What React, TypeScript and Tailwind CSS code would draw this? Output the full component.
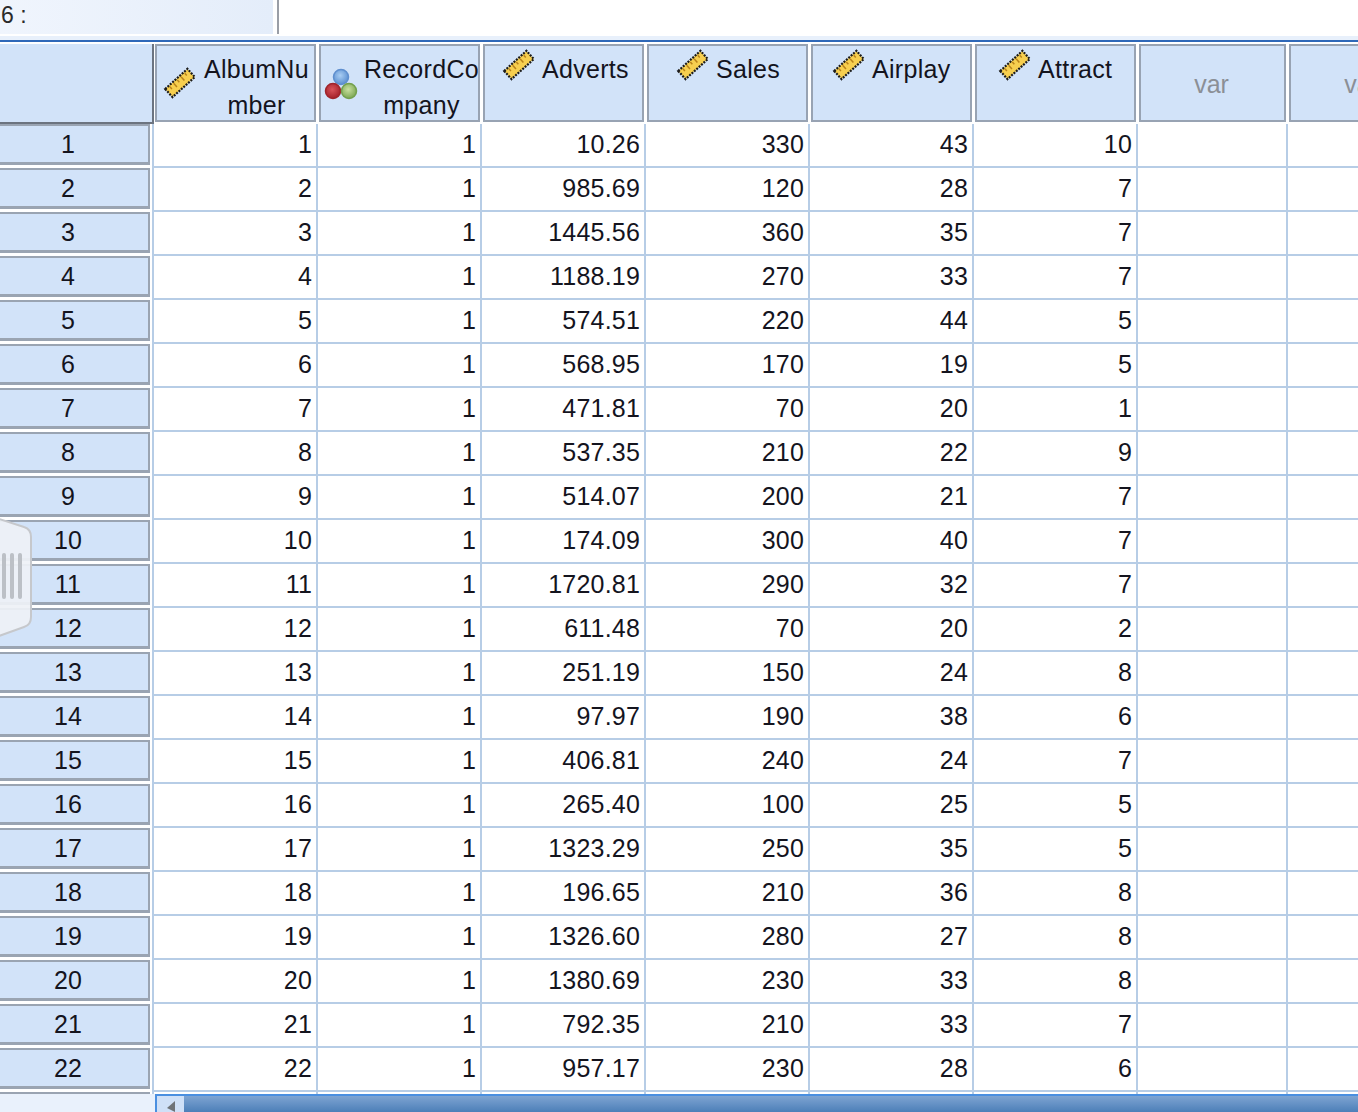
const rows: string[][] = [
  ["1","1","10.26","330","43","10"],["2","1","985.69","120","28","7"],["3","1","1445.56","360","35","7"],
  ["4","1","1188.19","270","33","7"],["5","1","574.51","220","44","5"],["6","1","568.95","170","19","5"],
  ["7","1","471.81","70","20","1"],["8","1","537.35","210","22","9"],["9","1","514.07","200","21","7"],
  ["10","1","174.09","300","40","7"],["11","1","1720.81","290","32","7"],["12","1","611.48","70","20","2"],
  ["13","1","251.19","150","24","8"],["14","1","97.97","190","38","6"],["15","1","406.81","240","24","7"],
  ["16","1","265.40","100","25","5"],["17","1","1323.29","250","35","5"],["18","1","196.65","210","36","8"],
  ["19","1","1326.60","280","27","8"],["20","1","1380.69","230","33","8"],["21","1","792.35","210","33","7"],
  ["22","1","957.17","230","28","6"],
];

function Ruler({ className }: { className: string }) {
  return (
    <svg width="34" height="32" viewBox="0 0 34 32" className={className}>
      <g transform="rotate(-42 17 16)">
        <rect x="2" y="10.5" width="30" height="11" fill="#f7cf4f" stroke="#1c1c1c" strokeWidth="2.2" strokeDasharray="2 1.2" />
        <path d="M7 12v3M12 12v5M17 12v3M22 12v5M27 12v3" stroke="#b9821a" strokeWidth="1.5" fill="none" />
      </g>
    </svg>
  );
}

function Balls({ className }: { className: string }) {
  return (
    <svg width="34" height="32" viewBox="0 0 34 32" className={className}>
      <defs>
        <radialGradient id="bb" cx="45%" cy="40%" r="60%"><stop offset="0%" stopColor="#a9cdf3" /><stop offset="100%" stopColor="#5b8fd0" /></radialGradient>
        <radialGradient id="br" cx="45%" cy="40%" r="60%"><stop offset="0%" stopColor="#d9535a" /><stop offset="100%" stopColor="#a3202a" /></radialGradient>
        <radialGradient id="bg" cx="45%" cy="40%" r="60%"><stop offset="0%" stopColor="#c9e0a0" /><stop offset="100%" stopColor="#7ba652" /></radialGradient>
      </defs>
      <circle cx="17" cy="9" r="7.5" fill="url(#bb)" stroke="#5f8fcf" strokeWidth="1.5" />
      <circle cx="9" cy="23" r="7.5" fill="url(#br)" stroke="#a0252c" strokeWidth="1.5" />
      <circle cx="25" cy="23" r="7.5" fill="url(#bg)" stroke="#73a04d" strokeWidth="1.5" />
    </svg>
  );
}

function VarHeader({ name, pad }: { name: string; pad: string }) {
  return (
    <div className={`h-[78px] w-[161px] mr-[3px] shrink-0 bg-[#d2e3f9] border-2 border-[#98a3b3] flex items-start overflow-hidden ${pad}`}>
      <Ruler className="mt-[3px] shrink-0" />
      <span className="mt-[5px] ml-[6px] leading-[36px] tracking-[0.3px]">{name}</span>
    </div>
  );
}

function TwoLineHeader({ a, b, nominal }: { a: string; b: string; nominal?: boolean }) {
  return (
    <div className={`h-[78px] w-[161px] mr-[3px] shrink-0 bg-[#d2e3f9] border-2 border-[#98a3b3] flex items-start overflow-hidden ${nominal ? "pl-[3px]" : "pl-[6px]"}`}>
      {nominal ? <Balls className="mt-[22px] shrink-0" /> : <Ruler className="mt-[21px] shrink-0" />}
      <div className={`mt-[5px] leading-[36px] text-center tracking-[0.3px] whitespace-nowrap ${nominal ? "ml-[6px]" : "ml-[7px]"}`}>
        <div>{a}</div>
        <div>{b}</div>
      </div>
    </div>
  );
}

function EmptyHeader() {
  return (
    <div className="h-[78px] w-[147px] mr-[3px] shrink-0 bg-[#d2e3f9] border-2 border-[#98a3b3] flex items-center justify-center text-[#8b8f96] pt-[4px] pr-[2px]">
      var
    </div>
  );
}

export default function App() {
  return (
    <div className="relative w-[1358px] h-[1112px] overflow-hidden bg-white text-[25px] text-[#14141e] font-['Liberation_Sans',Arial,sans-serif]">
      {/* Cell editor bar */}
      <div className="flex h-[34px]">
        <div className="w-[273px] bg-gradient-to-r from-[#f0f5fd] to-[#e4edfa] leading-[30px] text-[23px] pl-[1px] text-[#2a2a2a]">6 :</div>
        <div className="w-[4px]" />
        <div className="w-[2px] bg-[#9a9ea6]" />
      </div>
      <div className="h-[2px] bg-white" />
      <div className="h-[4px] bg-[#e8f0fb]" />
      <div className="h-[2px] bg-[#2f68b8]" />
      <div className="h-[2px] bg-white" />

      {/* Header row */}
      <div className="flex h-[80px] overflow-hidden">
        <div className="w-[154px] mr-[1px] h-[80px] shrink-0 bg-[#d2e3f9] border-r-2 border-b-2 border-[#6c7480]" />
        <TwoLineHeader a="AlbumNu" b="mber" />
        <TwoLineHeader a="RecordCo" b="mpany" nominal />
        <VarHeader name="Adverts" pad="pl-[17px]" />
        <VarHeader name="Sales" pad="pl-[27px]" />
        <VarHeader name="Airplay" pad="pl-[19px]" />
        <VarHeader name="Attract" pad="pl-[21px]" />
        <EmptyHeader />
        <EmptyHeader />
      </div>

      {/* Data rows */}
      <div className="flex flex-col">
        {rows.map((r, i) => (
          <div key={i} className="flex h-[44px]">
            <div className="w-[152px] shrink-0">
              <div className="h-[41px] w-[150px] bg-[#d2e3f9] border-t-2 border-r-[2px] border-b-[3px] border-[#9aa4b2] flex items-center justify-center pr-[12px] pt-[1px] tracking-[0.2px]">
                {i + 1}
              </div>
            </div>
            <div className="w-[2px] shrink-0 bg-[#b7cde6]" />
            <div className="flex flex-1 border-b-2 border-[#b7cde6]">
              {r.map((v, j) => (
                <div key={j} className="w-[164px] shrink-0 border-r-2 border-[#b7cde6] pl-[1px] pr-[4px] flex items-center justify-end tracking-[0.2px]">
                  {v}
                </div>
              ))}
              <div className="w-[150px] shrink-0 border-r-2 border-[#b7cde6]" />
              <div className="flex-1" />
            </div>
          </div>
        ))}
      </div>

      {/* Stub of the next row, cut off by the scrollbar */}
      <div className="flex h-[2px]">
        <div className="w-[150px] shrink-0 mr-[2px] bg-[#9aa4b2]" />
        <div className="w-[2px] shrink-0 bg-[#b7cde6]" />
        {rows[0].map((_, j) => (
          <div key={j} className="w-[164px] shrink-0 border-r-2 border-[#b7cde6]" />
        ))}
        <div className="w-[150px] shrink-0 border-r-2 border-[#b7cde6]" />
      </div>

      {/* Bottom scrollbar */}
      <div className="flex h-[18px]">
        <div className="w-[155px] shrink-0 bg-[#e9f1fc]" />
        <div className="flex-1 flex border-t-2 border-l-2 border-[#4a8fe0]">
          <div className="w-[27px] bg-[#cfe0f7] flex items-end justify-center">
            <svg width="10" height="12" viewBox="0 0 10 12"><path d="M9 1L1 8L9 12Z" fill="#6f7378" /></svg>
          </div>
          <div className="flex-1 bg-gradient-to-b from-[#7ea4d2] to-[#4c7fb8]" />
        </div>
      </div>

      {/* Floating splitter handle */}
      <div className="absolute left-[-4px] top-[517px] w-[36px] h-[120px]">
        <svg width="36" height="120" viewBox="0 0 36 120">
          <path d="M0 1L28 10Q35 12 35 20V100Q35 108 28 110L0 120Z" fill="#eef1f6" fillOpacity="0.93" stroke="#c6c8cc" strokeWidth="2" />
          <rect x="6" y="36" width="4" height="46" rx="2" fill="#bcc0c6" />
          <rect x="14" y="36" width="4" height="46" rx="2" fill="#bcc0c6" />
          <rect x="22" y="36" width="4" height="46" rx="2" fill="#bcc0c6" />
        </svg>
      </div>
    </div>
  );
}
